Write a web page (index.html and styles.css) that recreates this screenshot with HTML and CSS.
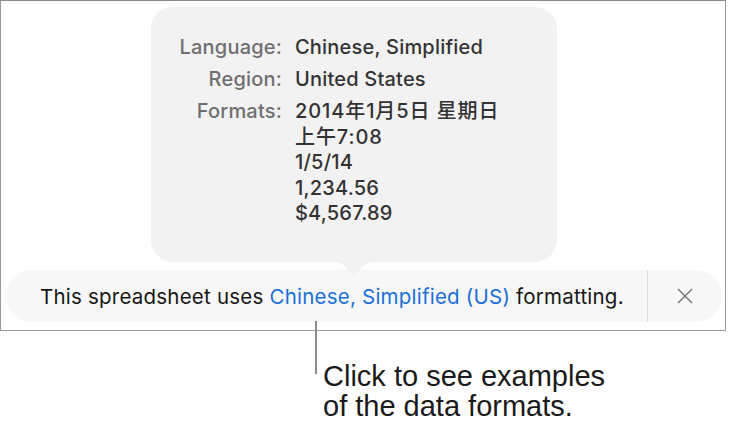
FILE: index.html
```html
<!DOCTYPE html>
<html lang="en">

<head>
    <meta charset="UTF-8">
    <meta name="viewport" content="width=device-width, initial-scale=1.0">
    <title>Language and Region</title>
    <link rel="stylesheet" href="styles.css">
</head>

<body>
    <div class="sheet">
        <!-- popover with the format examples -->
        <div class="popover">
            <div class="info">
                <div class="label">Language:</div>
                <div class="value">Chinese, Simplified</div>
                <div class="label">Region:</div>
                <div class="value">United States</div>
                <div class="label">Formats:</div>
                <div class="value">
                    <div class="cjk">2014年1月5日 星期日</div>
                    <div class="cjk">上午7:08</div>
                    <div>1/5/14</div>
                    <div>1,234.56</div>
                    <div>$4,567.89</div>
                </div>
            </div>
            <svg class="arrow" width="48" height="17" viewBox="0 0 48 17">
                <path d="M0 0 H48 C38 0 33 4 28 11 C26 14 25 16 24 16 C23 16 22 14 20 11 C15 4 10 0 0 0 Z" />
            </svg>
        </div>

        <!-- banner at the bottom of the sheet -->
        <div class="banner">
            <div class="message">This spreadsheet uses&nbsp;<a href="#">Chinese, Simplified (US)</a>&nbsp;formatting.</div>
            <button class="close" type="button">
                <svg width="16" height="16" viewBox="0 0 16 16">
                    <path d="M1 1 L15 15 M15 1 L1 15" />
                </svg>
            </button>
        </div>
    </div>

    <div class="callout">
        <div class="leader"></div>
        <p>Click to see examples<br>of the data formats.</p>
    </div>
</body>

</html>
```

FILE: styles.css
```css
body {
    margin: 0;
    background: #fff;
    font-family: Inter, "Noto Sans CJK SC", sans-serif;
}

.sheet {
    width: 726px;
    height: 331px;
    border: 1px solid #9a9a9a;
    border-top-color: #8a8a8a;
    padding-top: 6px;
    box-sizing: border-box;
    display: flex;
    flex-direction: column;
}

.popover {
    position: relative;
    z-index: 1;
    width: 406px;
    height: 255px;
    margin-left: 150px;
    box-sizing: border-box;
    padding: 28px 0 0 28px;
    background: #f2f2f2;
    border-radius: 22px;
}

.arrow {
    position: absolute;
    left: 179px;
    bottom: -16px;
}

.arrow path {
    fill: #f2f2f2;
}

.info {
    display: grid;
    grid-template-columns: 103px auto;
    column-gap: 13px;
    row-gap: 6.5px;
    font-size: 20px;
    font-weight: 500;
    letter-spacing: 0.2px;
    line-height: 25.5px;
}

.label {
    text-align: right;
    color: #6f6f6f;
}

.value {
    color: #333;
}

/* mixed latin / han lines get a bit of air between the glyphs */
.cjk {
    letter-spacing: 0.9px;
}

.banner {
    display: flex;
    align-items: stretch;
    height: 52px;
    margin: 8px 3px 0 4px;
    background: #f7f7f7;
    border-radius: 26px;
}

.message {
    flex: 1;
    display: flex;
    align-items: center;
    padding-left: 35px;
    font-size: 20.5px;
    letter-spacing: 0.22px;
    color: #161616;
}

.message a {
    color: #1b6fd6;
    text-decoration: none;
}

.close {
    width: 75px;
    border: none;
    border-left: 1px solid #dedede;
    background: none;
    padding: 0;
    display: flex;
    align-items: center;
    justify-content: center;
}

.close path {
    stroke: #7a7a7a;
    stroke-width: 1.5;
    fill: none;
}

.callout {
    display: flex;
    gap: 6px;
    margin: -10px 0 0 315px;
}

.leader {
    width: 2px;
    height: 53px;
    background: #8c8c8c;
}

.callout p {
    margin: 0;
    padding-top: 40px;
    font-family: "Liberation Sans", Arial, sans-serif;
    font-size: 29px;
    line-height: 30px;
    color: #1a1a1a;
}
```
